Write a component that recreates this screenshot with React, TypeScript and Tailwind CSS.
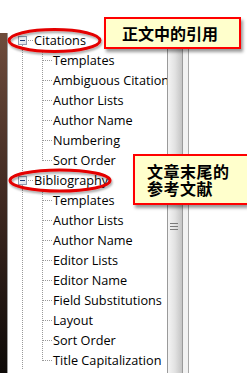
import React from 'react';

type Node = { label: string; children?: string[] };

const tree: Node[] = [
  {
    label: 'Citations',
    children: ['Templates', 'Ambiguous Citation', 'Author Lists', 'Author Name', 'Numbering', 'Sort Order'],
  },
  {
    label: 'Bibliography',
    children: [
      'Templates',
      'Author Lists',
      'Author Name',
      'Editor Lists',
      'Editor Name',
      'Field Substitutions',
      'Layout',
      'Sort Order',
      'Title Capitalization',
    ],
  },
];

const dot = '#9a9a9a';

function RootRow({ label, first }: { label: string; first: boolean }) {
  return (
    <div className="flex h-[20px] items-center">
      <svg width="26" height="20" className="shrink-0">
        {!first && <line x1="14.5" y1="0" x2="14.5" y2="6" stroke={dot} strokeDasharray="1 1" />}
        <line x1="14.5" y1="15" x2="14.5" y2="20" stroke={dot} strokeDasharray="1 1" />
        <line x1="20" y1="10.5" x2="25" y2="10.5" stroke={dot} strokeDasharray="1 1" />
        <defs>
          <linearGradient id="bx" x1="0" y1="0" x2="1" y2="1">
            <stop offset="0" stopColor="#ffffff" />
            <stop offset="1" stopColor="#d8dde6" />
          </linearGradient>
        </defs>
        <rect x="10.5" y="6.5" width="8" height="8" fill="url(#bx)" stroke="#8f9bb0" />
        <line x1="12" y1="10.5" x2="17" y2="10.5" stroke="#1d3c78" />
      </svg>
      <span>{label}</span>
    </div>
  );
}

function ChildRow({ label, last }: { label: string; last: boolean }) {
  return (
    <div className="flex h-[20px] items-center">
      <svg width="45" height="20" className="shrink-0">
        <line x1="14.5" y1="0" x2="14.5" y2="20" stroke={dot} strokeDasharray="1 1" />
        <line x1="34.5" y1="0" x2="34.5" y2={last ? 11 : 20} stroke={dot} strokeDasharray="1 1" />
        <line x1="35" y1="10.5" x2="44" y2="10.5" stroke={dot} strokeDasharray="1 1" />
      </svg>
      <span className="whitespace-nowrap">{label}</span>
    </div>
  );
}

export default function App() {
  return (
    <div className="relative w-[247px] h-[373px] overflow-hidden bg-white">
      <div className="h-[30px]" />
      <div className="flex h-[343px]">
        <div className="w-[8px] mt-[3px] bg-gradient-to-b from-[#6e4c3c] via-[#3e2820] to-[#0e0a08] border-r border-[#9c9c9c]" />
        <div className="w-[159px] overflow-hidden text-[12.7px] leading-[20px] text-black font-['Open_Sans',sans-serif]">
          {tree.map((n, i) => (
            <div key={n.label}>
              <RootRow label={n.label} first={i === 0} />
              {n.children?.map((c, j) => (
                <ChildRow key={c + j} label={c} last={j === n.children!.length - 1} />
              ))}
            </div>
          ))}
        </div>
        <div className="flex w-[22px]">
          <div className="relative w-[16px] border-x border-[#9a9a9a] bg-gradient-to-r from-[#f4f4f4] via-[#e2e2e2] to-[#c4c4c4]">
            <div className="absolute left-[2px] top-[193px] flex w-[8px] flex-col gap-[2px]">
              <div className="h-px bg-[#7a7a7a]" />
              <div className="h-px bg-[#7a7a7a]" />
              <div className="h-px bg-[#7a7a7a]" />
            </div>
          </div>
          <div className="w-[6px] border-r border-[#a8a8a8] bg-[#f2f2f2]" />
        </div>
        <div className="flex-1" />
      </div>

      <svg className="absolute left-0 top-0" width="247" height="373">
        <defs>
          <filter id="sh" x="-10%" y="-30%" width="130%" height="170%">
            <feDropShadow dx="1" dy="2" stdDeviation="1" floodColor="#000" floodOpacity="0.35" />
          </filter>
        </defs>
        <ellipse cx="54.5" cy="40.5" rx="45.5" ry="11" fill="none" stroke="#e40000" strokeWidth="3" filter="url(#sh)" />
        <ellipse cx="60" cy="180.5" rx="50" ry="10.5" fill="none" stroke="#e40000" strokeWidth="3" filter="url(#sh)" />
      </svg>

      <div className="absolute left-[104px] top-[17px] flex h-[32px] w-[137px] items-center border-2 border-[#ff0000] bg-[#ffffcc] pl-[16px] shadow-[2px_3px_3px_rgba(0,0,0,0.4)]">
        <span className="text-[16px] font-bold leading-none text-black font-['Noto_Sans_CJK_SC',sans-serif]">正文中的引用</span>
      </div>

      <div className="absolute left-[133px] top-[154px] flex h-[51px] w-[114px] items-center border-2 border-r-0 border-[#ff0000] bg-[#ffffcc] pl-[12px] shadow-[2px_3px_3px_rgba(0,0,0,0.4)]">
        <p className="text-[16px] font-bold leading-[17px] tracking-[0.5px] text-black font-['Noto_Sans_CJK_SC',sans-serif]">
          文章末尾的
          <br />
          参考文献
        </p>
      </div>
    </div>
  );
}
